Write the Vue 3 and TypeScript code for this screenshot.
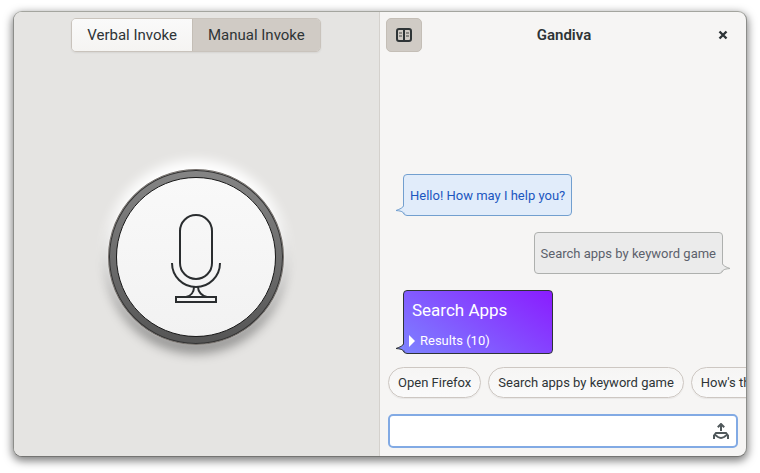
<script setup lang="ts">
import { ref } from 'vue'

type Mode = 'verbal' | 'manual'

const mode = ref<Mode>('manual')
const draft = ref('')
const panelOpen = ref(true)
const modes: { id: Mode; label: string }[] = [
  { id: 'verbal', label: 'Verbal Invoke' },
  { id: 'manual', label: 'Manual Invoke' },
]
const suggestions = ['Open Firefox', 'Search apps by keyword game', "How's the weather"]
</script>

<template>
  <div class="desktop">
    <main class="window">
      <section class="invoke">
        <header class="bar bar-centered">
          <div class="switcher">
            <button
              v-for="m in modes"
              :key="m.id"
              type="button"
              :class="{ active: mode === m.id }"
              :aria-pressed="mode === m.id"
              @click="mode = m.id"
            >{{ m.label }}</button>
          </div>
        </header>
        <div class="stage">
          <button class="mic" type="button" aria-label="Speak">
            <svg viewBox="9 9 158 158" fill="none" stroke="#2a2d2f" stroke-width="2">
              <rect x="72" y="46" width="32" height="64" rx="16" />
              <path d="M64 94a24 24 0 0 0 48 0" />
              <path d="M86 118c0 5-3 9-8 10M90 118c0 5 4 9 9 10" />
              <rect x="68" y="128" width="40" height="5" />
            </svg>
          </button>
        </div>
      </section>

      <section class="chat">
        <header class="bar">
          <button class="panel-toggle" type="button" aria-label="Toggle panel" :aria-pressed="panelOpen" @click="panelOpen = !panelOpen">
            <svg viewBox="0 0 16 16" width="16" height="16">
              <rect x="1" y="2" width="14" height="12" rx="2" fill="none" stroke="#2e3436" stroke-width="2" />
              <path d="M8 2v12" stroke="#2e3436" stroke-width="2" />
              <path d="M3 6h3M3 9h3M10 6h3M10 9h3" stroke="#8b8985" stroke-width="2" />
            </svg>
          </button>
          <h1>Gandiva</h1>
          <button class="close" type="button" aria-label="Close">
            <svg viewBox="0 0 10 10" width="10" height="10">
              <path d="M1.5 1.5l7 7M8.5 1.5l-7 7" stroke="#2e3436" stroke-width="2.4" />
            </svg>
          </button>
        </header>

        <div class="messages">
          <div class="bubble bot">
            Hello! How may I help you?
            <svg class="tail" viewBox="0 0 8 10"><path d="M8 0C7 3 4 4 0 5.500C4 6 7 6 8 9" /></svg>
          </div>
          <div class="bubble user">
            Search apps by keyword game
            <svg class="tail" viewBox="0 0 8 10"><path d="M0 0C1 3 4 4 8 5.500C4 6 1 6 0 9" /></svg>
          </div>
          <article class="bubble card">
            <h2>Search Apps</h2>
            <button class="expander" type="button" aria-expanded="false">
              <svg viewBox="0 0 6 12" width="6" height="12"><path d="M0 0l6 6-6 6z" fill="#fff" /></svg>
              Results (10)
            </button>
            <svg class="tail" viewBox="0 0 8 10"><path d="M8 0C7 3 4 4 0 5.500C4 6 7 6 8 9" /></svg>
          </article>
        </div>

        <div class="chips">
          <button v-for="s in suggestions" :key="s" type="button">{{ s }}</button>
        </div>

        <form class="composer" @submit.prevent="draft = ''">
          <input v-model="draft" type="text" aria-label="Message" />
          <button type="submit" aria-label="Send">
            <svg viewBox="0 0 16 16" width="16" height="16" fill="none" stroke="#50585b" stroke-width="2">
              <path d="M8 8V1.500M4.800 4.200L8 1l3.200 3.200" />
              <path d="M1 16v-3.500L3 10h10l2 2.500V16" />
              <path d="M1.500 11.500L5 14c2 1.200 4 1.200 6 0l3.500-2.500" />
            </svg>
          </button>
        </form>
      </section>
    </main>
  </div>
</template>

<style>
body {
  margin: 0;
  background: #fff;
}
</style>

<style scoped>
.desktop {
  box-sizing: border-box;
  min-height: 100vh;
  display: flex;
  padding: 11px 13px 16px;
  font-family: Roboto, "Noto Sans", sans-serif;
  color: #2e3436;
}
.desktop * {
  box-sizing: border-box;
}
button,
input {
  font: inherit;
  color: inherit;
  margin: 0;
  padding: 0;
}
svg {
  display: block;
}
.window {
  flex: 1;
  min-width: 0;
  display: grid;
  grid-template-columns: minmax(0, 1fr) minmax(0, 1fr);
  overflow: hidden;
  border: 1px solid #8c8d8a;
  border-top-color: #a4a59f;
  border-bottom-color: #747472;
  border-radius: 9px;
  background: #f6f5f4;
  box-shadow: 0 3px 9px 1px rgba(0, 0, 0, 0.5);
}
.invoke {
  display: flex;
  flex-direction: column;
  padding-right: 1px;
  background: #e5e4e2;
  border-right: 1px solid #d4d1cd;
}
.chat {
  display: flex;
  flex-direction: column;
  min-width: 0;
}
.bar {
  display: flex;
  align-items: center;
  justify-content: space-between;
  height: 46px;
  padding: 0 6px;
}
.bar-centered {
  justify-content: center;
}
.switcher {
  display: flex;
  height: 34px;
  border: 1px solid #c9c3bc;
  border-radius: 5px;
  overflow: hidden;
  box-shadow: 0 1px 2px rgba(0, 0, 0, 0.07);
}
.switcher button {
  border: 0;
  padding: 0 15px;
  font-size: 15px;
  background: linear-gradient(#fafafa, #f5f4f2);
}
.switcher button + button {
  border-left: 1px solid #c4beb6;
}
.switcher .active {
  background: #d0cbc5;
}
.stage {
  flex: 1;
  display: flex;
  align-items: center;
  justify-content: center;
}
.mic {
  width: 176px;
  height: 176px;
  padding: 7px;
  border: 1px solid #77726e;
  border-radius: 50%;
  background: linear-gradient(#858585, #555);
  box-shadow: inset 0 0 0 1px #333, 0 -7px 12px 2px #fff, 0 8px 12px rgba(0, 0, 0, 0.4);
}
.mic svg {
  width: 160px;
  height: 160px;
  border: 1px solid #1a1a1a;
  border-radius: 50%;
  background: linear-gradient(#f9f9f9, #f2f2f2);
}
.panel-toggle {
  display: grid;
  place-items: center;
  width: 36px;
  height: 34px;
  border: 1px solid #c4beb6;
  border-radius: 5px;
  background: #d0cbc5;
}
h1 {
  margin: 0;
  font-size: 15px;
  font-weight: 600;
}
.close {
  display: grid;
  place-items: center;
  width: 34px;
  height: 34px;
  border: 0;
  background: none;
}
.messages {
  flex: 1;
  display: flex;
  flex-direction: column;
  align-items: flex-start;
  justify-content: flex-end;
  gap: 16px;
  padding: 0 23px;
}
.bubble {
  position: relative;
  display: flex;
  align-items: center;
  height: 42px;
  padding: 0 6px;
  border: 1px solid;
  border-radius: 4px;
  font-size: 13px;
  white-space: nowrap;
}
.bot {
  background: #e1ecfa;
  border-color: #729fcf;
  color: #1b56c0;
}
.user {
  align-self: flex-end;
  background: #ebebeb;
  border-color: #aeb0ae;
  color: #5c616c;
}
.card {
  flex-direction: column;
  align-items: flex-start;
  justify-content: space-between;
  width: 150px;
  height: 64px;
  padding: 7px 5px 3px;
  border-color: #2e3436;
  background: linear-gradient(35deg, #7d82ff, #8a1cff);
  color: #fff;
}
.card h2 {
  margin: 0 3px;
  font-size: 17px;
  line-height: 24px;
  font-weight: 400;
}
.expander {
  display: flex;
  align-items: center;
  gap: 5px;
  border: 0;
  background: none;
  font-size: 13px;
  line-height: 18px;
}
.tail {
  position: absolute;
  bottom: 0;
  left: -8px;
  width: 8px;
  height: 10px;
}
.tail path {
  fill: #e1ecfa;
  stroke: #729fcf;
}
.user .tail {
  left: auto;
  right: -8px;
}
.user .tail path {
  fill: #ebebeb;
  stroke: #aeb0ae;
}
.card .tail path {
  fill: #7d82ff;
  stroke: #2e3436;
}
.chips {
  display: flex;
  gap: 7px;
  overflow: hidden;
  padding: 13px 0 2px 8px;
}
.chips button {
  flex: none;
  height: 31px;
  padding: 0 9px;
  border: 1px solid #cdc7c2;
  border-radius: 16px;
  background: linear-gradient(#f6f5f4, #fafafa);
  font-size: 13px;
  box-shadow: 0 1px 1px rgba(0, 0, 0, 0.06);
}
.composer {
  display: flex;
  align-items: center;
  height: 34px;
  margin: 14px 8px 8px;
  padding-right: 7px;
  border: 2px solid #82aae4;
  border-radius: 5px;
  background: #fff;
}
.composer input {
  flex: 1;
  min-width: 0;
  height: 30px;
  padding: 0 8px;
  border: 0;
  outline: 0;
  background: none;
  font-size: 13px;
}
.composer button {
  border: 0;
  background: none;
}
</style>
